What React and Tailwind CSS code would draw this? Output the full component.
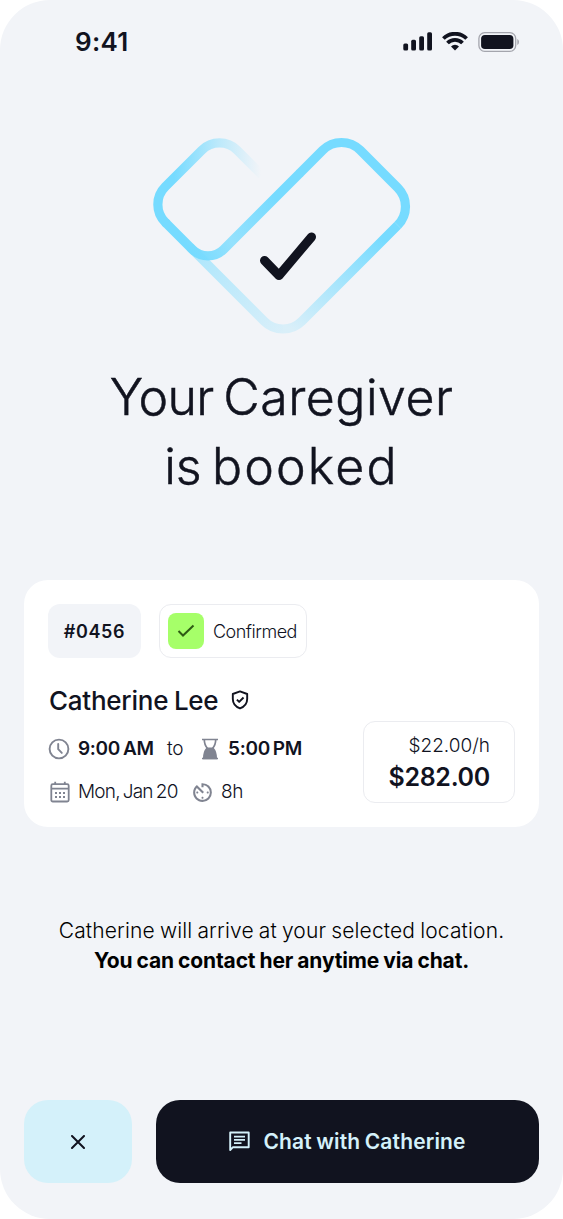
import React from 'react';
import { MdAvTimer } from 'react-icons/md';

const sky = '#76dbff';

function StatusBar() {
  return (
    <div className="flex h-[82px] items-center justify-between pl-[75px] pr-[43px] pt-px">
      <span className="text-[26px] font-semibold leading-8 tracking-[0.3px]">9:41</span>
      <div className="flex items-center">
        <svg width="30" height="19" viewBox="0 0 30 19" fill="currentColor">
          <rect x="0.3" y="11.5" width="4.8" height="7" rx="1.5" />
          <rect x="8.2" y="7.8" width="4.8" height="10.7" rx="1.5" />
          <rect x="16.2" y="4.2" width="4.8" height="14.3" rx="1.5" />
          <rect x="24.2" y="0.3" width="4.8" height="18.2" rx="1.5" />
        </svg>
        <svg className="ml-[9px]" width="26" height="19" viewBox="0 0 26 19" fill="none" stroke="currentColor" strokeWidth="3.8">
          <path d="M1.4 6.5a16.5 16.5 0 0 1 23.2 0" />
          <path d="M5.5 11a10.6 10.6 0 0 1 15 0" />
          <path d="M9 14.4a5.6 5.6 0 0 1 8 0L13 18.6z" fill="currentColor" stroke="none" />
        </svg>
        <svg className="ml-[10px]" width="42" height="20" viewBox="0 0 42 20" fill="none">
          <rect x="0.9" y="0.7" width="36.8" height="18.6" rx="5.8" stroke="#a4a5ad" strokeWidth="1.3" />
          <rect x="3.1" y="2.9" width="32.3" height="14.2" rx="3.8" fill="#11131f" />
          <path d="M39.3 7v6c2.2-1 2.2-5 0-6z" fill="#a4a5ad" />
        </svg>
      </div>
    </div>
  );
}

function HeartLogo() {
  return (
    <svg className="mx-auto" width="263" height="204" viewBox="150 134 263 204" fill="none">
      <defs>
        <linearGradient id="tip" gradientUnits="userSpaceOnUse" x1="261" y1="176" x2="174" y2="176">
          <stop offset="0" stopColor={sky} stopOpacity="0" />
          <stop offset="0.5" stopColor={sky} stopOpacity="0.45" />
          <stop offset="1" stopColor={sky} />
        </linearGradient>
        <linearGradient id="middle" gradientUnits="userSpaceOnUse" x1="190" y1="250" x2="275" y2="198">
          <stop offset="0" stopColor={sky} />
          <stop offset="0.4" stopColor={sky} stopOpacity="0.75" />
          <stop offset="1" stopColor={sky} />
        </linearGradient>
        <linearGradient id="base" gradientUnits="userSpaceOnUse" x1="370" y1="230" x2="300" y2="335">
          <stop offset="0" stopColor={sky} />
          <stop offset="1" stopColor={sky} stopOpacity="0.2" />
        </linearGradient>
        <linearGradient id="tail" gradientUnits="userSpaceOnUse" x1="195" y1="252" x2="283" y2="335">
          <stop offset="0" stopColor={sky} stopOpacity="0.55" />
          <stop offset="1" stopColor={sky} stopOpacity="0.2" />
        </linearGradient>
      </defs>
      <g strokeWidth="9.2">
        <path stroke="url(#tail)" d="M190 247L264.2 321.2A26.600 26.600 0 0 0 283 329" />
        <path stroke="url(#base)" d="M397.7 225.3L301.8 321.2A26.600 26.600 0 0 1 283 329" />
        <path stroke="url(#tip)" d="M262 175L237.2 150.2A25 25 0 0 0 201.8 150.2L165.2 186.8A25 25 0 0 0 165.2 222.2L167 224" />
        <path stroke="url(#middle)" d="M165.2 222.2L192.4 249.4A22 22 0 0 0 223.6 249.4L300 173" />
        <path stroke={sky} d="M299.5 173.5L322.7 150.3A26.6 26.6 0 0 1 360.3 150.3L397.7 187.7A26.6 26.6 0 0 1 397.7 225.3" />
      </g>
      <path d="M264.5 260.5L279 275.5L311.5 237" stroke="#11131f" strokeWidth="9" strokeLinecap="round" strokeLinejoin="round" />
    </svg>
  );
}

function ClockIcon() {
  return (
    <svg width="22" height="22" viewBox="0 0 22 22" fill="none" stroke="#808491" strokeWidth="1.9" strokeLinecap="round">
      <circle cx="11" cy="11" r="9.4" />
      <path d="M10.2 6v5.2l3.6 3.7" />
    </svg>
  );
}

function HourglassIcon() {
  return (
    <svg width="18" height="22" viewBox="0 0 18 22" fill="none" stroke="#808491" strokeWidth="1.7">
      <path d="M1 1.5h16M1 20.5h16" />
      <path d="M3.3 1.5c0 4.5 1 6.5 3.2 9M14.7 1.5c0 4.5-1 6.5-3.2 9" />
      <path d="M6 10.3h6c2.2 2.3 3.2 5 3.2 10.2H2.800c0-5.200 1-7.900 3.200-10.200z" fill="#808491" />
    </svg>
  );
}

function CalendarIcon() {
  return (
    <svg width="20" height="22" viewBox="0 0 20 22" fill="none" stroke="#808491" strokeWidth="1.8">
      <rect x="1.3" y="3.2" width="17.4" height="17.3" rx="1.5" />
      <path d="M1.3 7.6h17.4M5.2 0.8v3M14.8 0.8v3" />
      <path d="M5 12h2M9 12h2M13 12h2M5 16h2M9 16h2M13 16h2" strokeWidth="2" />
    </svg>
  );
}

function ShieldIcon() {
  return (
    <svg width="18" height="20" viewBox="0 0 18 22" fill="none" stroke="currentColor" strokeWidth="2.1" strokeLinejoin="round">
      <path d="M9 1.5L16.9 4.4V10c0 5-3.3 8.6-7.9 10.3C4.4 18.6 1.1 15 1.1 10V4.4z" />
      <path d="M5.6 10.6l2.5 2.5 4.8-4.8" />
    </svg>
  );
}

function BookingCard() {
  return (
    <section className="mx-6 mt-[79px] h-[247px] rounded-[24px] bg-white px-6 pt-6">
      <div className="flex gap-[18px]">
        <div className="flex h-[54px] w-[93px] items-center justify-center rounded-xl bg-[#f2f4f8] text-[18px] font-semibold tracking-[0.6px]">#0456</div>
        <div className="flex h-[54px] w-[148px] items-center rounded-xl border-[1.5px] border-[#ebecf0] pl-2">
          <span className="flex size-9 items-center justify-center rounded-lg bg-[#a6ff69]">
            <svg width="18" height="14" viewBox="0 0 18 14" fill="none" stroke="#2e5b14" strokeWidth="2">
              <path d="M1.5 7l4.5 4.5L16.5 1.5" />
            </svg>
          </span>
          <span className="ml-[9px] whitespace-nowrap text-[18px] font-light tracking-[-0.5px]">Confirmed</span>
        </div>
      </div>
      <div className="flex justify-between">
        <div className="pt-6">
          <h2 className="flex h-9 items-center gap-[13px] whitespace-nowrap pl-px text-[26px] font-medium">
            <span className="tracking-[-0.25px] [word-spacing:-1px]">Catherine Lee</span>
            <ShieldIcon />
          </h2>
          <div className="mt-[18px] flex h-[26px] items-center whitespace-nowrap text-[19px] font-semibold tracking-[-0.3px] [word-spacing:-1.5px]">
            <span className="mr-2"><ClockIcon /></span>
            <span className="w-[89px]">9:00 AM</span>
            <span className="w-[34px] font-light">to</span>
            <span className="mr-[9px]"><HourglassIcon /></span>
            <span>5:00 PM</span>
          </div>
          <div className="mt-[17px] flex h-[26px] items-center whitespace-nowrap text-[19px] font-light">
            <span className="mr-2 ml-[2px]"><CalendarIcon /></span>
            <span className="w-[112px] tracking-[-0.8px] [word-spacing:-1.5px]">Mon, Jan 20</span>
            <MdAvTimer className="mr-[6px]" size={25} color="#808491" />
            <span className="tracking-[-0.4px]">8h</span>
          </div>
        </div>
        <div className="mt-[63px] h-[82px] w-[152px] rounded-xl border-[1.5px] border-[#ebecf0] pr-6 pt-[9px] text-right">
          <div className="text-[19px] font-light leading-[30px]">$22.00/h</div>
          <div className="text-[25px] font-semibold leading-[32px] tracking-[-0.3px]">$282.00</div>
        </div>
      </div>
    </section>
  );
}

function App() {
  return (
    <div className="bg-white">
      <main className="flex h-[1219px] w-[563px] flex-col rounded-[50px] bg-[#f2f4f8] font-['Inter',sans-serif] text-[#11131f]">
        <StatusBar />
        <div className="mt-[52px]">
          <HeartLogo />
        </div>
        <h1 className="mt-[25px] text-center text-[50px] font-light leading-[69px] [-webkit-text-stroke:0.5px_#11131f]">
          <span className="tracking-[-0.6px]">Your</span>
          <span className="tracking-[0.5px] [word-spacing:-5px]"> Caregiver</span><br />
          <span>is</span>
          <span className="tracking-[2.2px] [word-spacing:-6px]"> booked</span>
        </h1>
        <BookingCard />
        <p className="mt-[89px] whitespace-nowrap text-center text-[21px] leading-[30px] text-black">
          <span className="font-light tracking-[0.15px] [word-spacing:-1px]">Catherine will arrive at your selected location.</span><br />
          <span className="font-bold tracking-[-0.15px] [word-spacing:-0.7px]">You can contact her anytime via chat.</span>
        </p>
        <div className="mx-6 mt-auto mb-9 flex h-[83px] gap-6">
          <button className="flex w-[108px] items-center justify-center rounded-[24px] bg-[#d4f1fa]">
            <svg width="14" height="14" viewBox="0 0 14 14" stroke="currentColor" strokeWidth="2" strokeLinecap="round">
              <path d="M1 1l12 12M13 1L1 13" />
            </svg>
          </button>
          <button className="flex flex-1 items-center justify-center gap-[13px] rounded-[24px] bg-[#11131f] text-[21px] font-semibold text-[#d4f1fa]">
            <svg width="21" height="21" viewBox="0 0 21 21" fill="none" stroke="currentColor" strokeWidth="1.9" strokeLinejoin="round">
              <path d="M1.2 19V1.5h18.5v14.7H4z" />
              <path d="M5 5.7h11M5 8.9h11M5 12.1h7.5" strokeWidth="1.7" />
            </svg>
            <span className="whitespace-nowrap tracking-[0.15px] [word-spacing:-1px]">Chat with Catherine</span>
          </button>
        </div>
      </main>
    </div>
  );
}

export default App;
